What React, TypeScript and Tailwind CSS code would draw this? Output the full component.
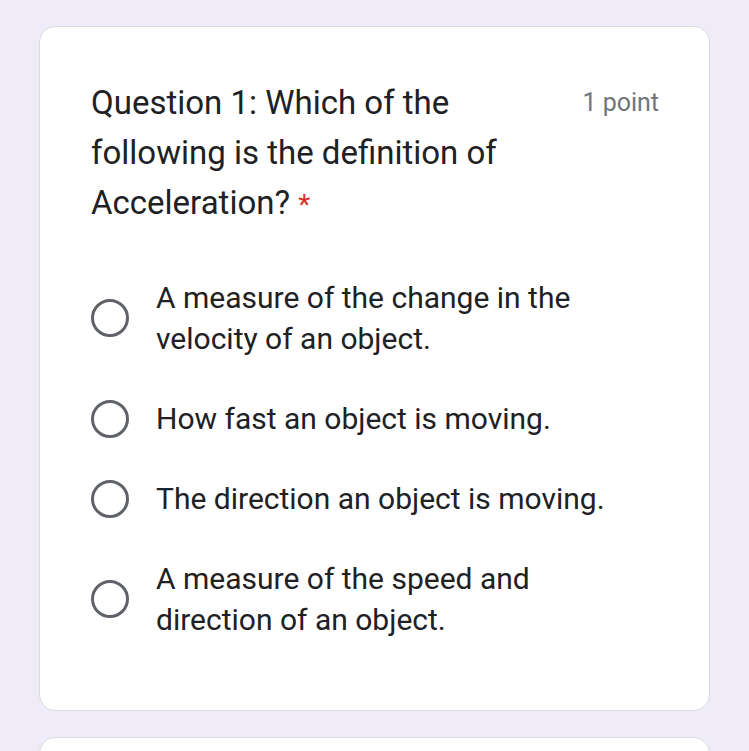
import React from "react";

const options = [
  "A measure of the change in the velocity of an object.",
  "How fast an object is moving.",
  "The direction an object is moving.",
  "A measure of the speed and direction of an object.",
];

function Radio() {
  return (
    <div className="w-[38px] h-[38px] shrink-0 rounded-full border-[3px] border-[#5f6368]" />
  );
}

export default function App() {
  return (
    <div className="w-[749px] h-[751px] overflow-hidden bg-[#efebf8] pt-[26px] px-[39px]" style={{ fontFamily: "Roboto, 'Liberation Sans', sans-serif" }}>
      <div className="bg-white rounded-[16px] border border-[#dadce0] h-[685px] pl-[51px] pr-[50px] pt-[51px]">
        <div className="flex justify-between items-start">
          <div className="w-[470px] text-[33px] leading-[50px] text-[#202124]">
            Question 1: Which of the following is the definition of Acceleration? <span className="text-[#d93025] text-[28px]">*</span>
          </div>
          <div className="text-[25px] leading-[50px] text-[#70757a]">1 point</div>
        </div>
        <div className="mt-[47px] flex flex-col gap-[39px]">
          {options.map((o) => (
            <div key={o} className="flex items-center gap-[27px]">
              <Radio />
              <div className="w-[470px] text-[30px] leading-[41px] text-[#202124]">{o}</div>
            </div>
          ))}
        </div>
      </div>
      <div className="mt-[26px] bg-white rounded-[16px] border border-[#dadce0] h-[100px]" />
    </div>
  );
}
